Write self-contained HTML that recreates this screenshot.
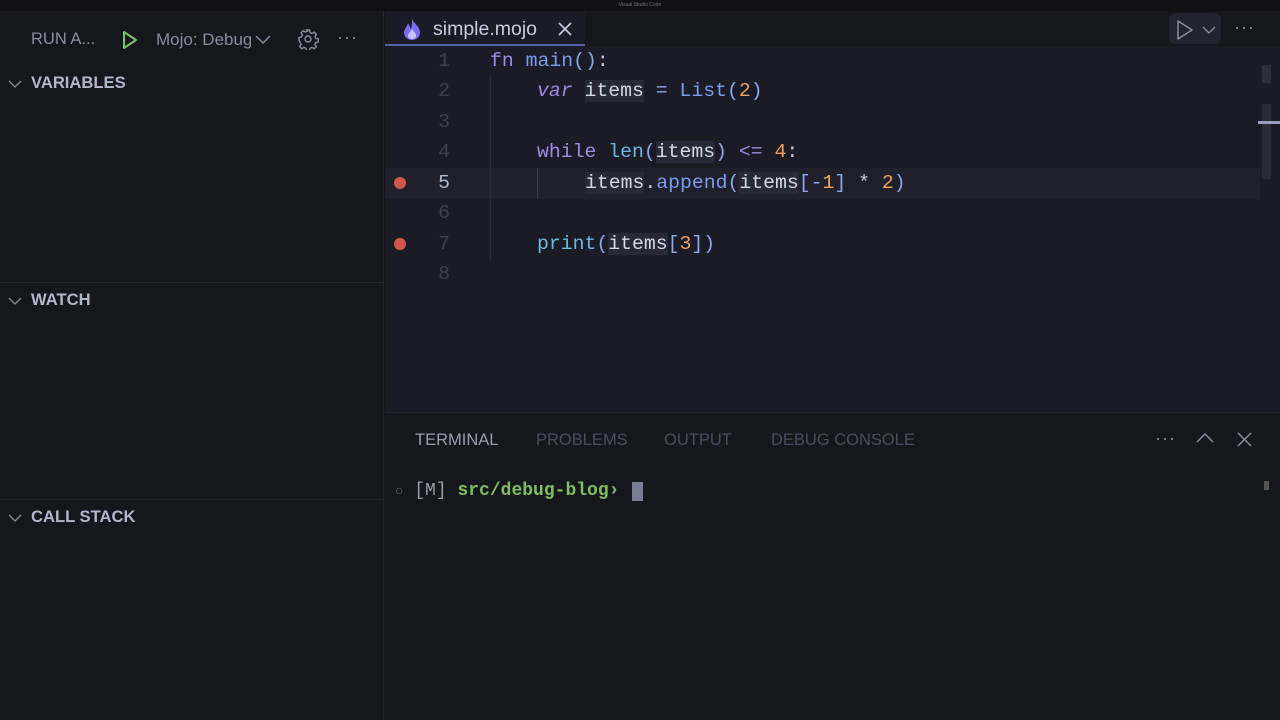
<!DOCTYPE html>
<html><head><style>
*{margin:0;padding:0;box-sizing:border-box}
body{width:1280px;height:720px;background:#16161d;font-family:"Liberation Sans",sans-serif;position:relative;overflow:hidden}
.abs{position:absolute}
.title{left:0;top:0;width:1280px;height:11px;background:#0f0f14;color:#777;font-size:5px;text-align:center;line-height:11px}
.side{left:0;top:11px;width:384px;height:709px;background:#16161d;border-right:1px solid #24242e}
.sec{left:0;width:384px;height:30px;color:#b4b6cc;font-weight:bold;font-size:16.6px;line-height:30px;padding-left:31px}
.chev{position:absolute;left:8px;top:9px}
.tabbar{left:385px;top:11px;width:895px;height:35px;background:#16161d}
.tab{left:385px;top:11px;width:200px;height:35px;background:#1b1b25;border-bottom:2px solid #5560a8}
.editor{left:385px;top:46px;width:895px;height:366px;background:#1b1b25}
.code{font-family:"Liberation Mono",monospace;font-size:19.8px}
.ln{width:65px;text-align:right;color:#3d4052}
.line{left:385px;height:30.5px;line-height:30.5px;width:895px;white-space:pre}
.kw{color:#a188e6}.fn{color:#7a9cf0}.num{color:#f0a060}.id{color:#d4d7e6;background:#272936}.p{color:#8aa8f0}.cy{color:#6cb8e0}.w{color:#c8cbe0}
.bp{width:12px;height:12px;border-radius:50%;background:#d2574a;left:394px}
.panel{left:385px;top:412px;width:895px;height:308px;background:#16161d;border-top:1px solid #24242e}
.ptab{top:431px;font-size:16.5px;color:#4a4d60}
</style></head><body>
<div class="abs title">Visual Studio Code</div>
<div class="abs side"></div>
<div class="abs" style="left:31px;top:30px;color:#8a8ca0;font-size:16.5px">RUN A...</div>
<svg class="abs" style="left:121px;top:30px" width="18" height="20"><path d="M3 2 L15 10 L3 18 Z" fill="none" stroke="#7ec26a" stroke-width="2" stroke-linejoin="round"/></svg>
<div class="abs" style="left:156px;top:30px;color:#8a8ca0;font-size:17px;width:95px;overflow:hidden;white-space:nowrap">Mojo: Debug</div>
<svg class="abs" style="left:254px;top:32px" width="18" height="14"><path d="M2 4 L9 11 L16 4" fill="none" stroke="#8a8ca0" stroke-width="1.5"/></svg>
<svg class="abs" style="left:297px;top:28px" width="22" height="22" viewBox="0 0 22 22"><circle cx="11" cy="11" r="3" fill="none" stroke="#8a8ca0" stroke-width="1.4"/><path d="M9.5 2h3l.5 2.5 2 1 2.2-1.4 2.1 2.1-1.4 2.2 1 2 2.5.5v3l-2.5.5-1 2 1.4 2.2-2.1 2.1-2.2-1.4-2 1-.5 2.5h-3l-.5-2.5-2-1-2.2 1.4-2.1-2.1 1.4-2.2-1-2L2 12.5v-3l2.5-.5 1-2-1.4-2.2 2.1-2.1 2.2 1.4 2-1z" fill="none" stroke="#8a8ca0" stroke-width="1.4"/></svg>
<div class="abs" style="left:337px;top:27px;color:#8a8ca0;font-size:18px;letter-spacing:1px">···</div>

<div class="abs sec" style="top:68px"><svg class="chev" width="14" height="14"><path d="M1 4 L7 10 L13 4" fill="none" stroke="#8a8ca0" stroke-width="1.3"/></svg>VARIABLES</div>
<div class="abs" style="left:0;top:282px;width:384px;height:1px;background:#24242e"></div>
<div class="abs sec" style="top:285px"><svg class="chev" width="14" height="14"><path d="M1 4 L7 10 L13 4" fill="none" stroke="#8a8ca0" stroke-width="1.3"/></svg>WATCH</div>
<div class="abs" style="left:0;top:499px;width:384px;height:1px;background:#24242e"></div>
<div class="abs sec" style="top:502px"><svg class="chev" width="14" height="14"><path d="M1 4 L7 10 L13 4" fill="none" stroke="#8a8ca0" stroke-width="1.3"/></svg>CALL STACK</div>

<div class="abs tabbar"></div>
<div class="abs tab"></div>
<svg class="abs" style="left:401px;top:17px" width="22" height="24"><path d="M11 2 C13 7 19 9 19 16 C19 20 15 23 11 23 C7 23 3 20 3 16 C3 12 6 10 7 6 C9 9 9 11 10 12 C11 9 11 6 11 2Z" fill="#7a6cf0"/><path d="M11 12 C13 15 15 16 15 19 C15 21 13 22 11 22 C9 22 7 21 7 19 C7 17 9 15 11 12Z" fill="#c8c4ff"/></svg>
<div class="abs" style="left:433px;top:18px;color:#c8cbe0;font-size:19.5px">simple.mojo</div>
<svg class="abs" style="left:557px;top:21px" width="16" height="16"><path d="M2 2 L14 14 M14 2 L2 14" stroke="#c8cbe0" stroke-width="1.7"/></svg>
<div class="abs" style="left:1169px;top:13px;width:52px;height:31px;background:#22232e;border-radius:6px"></div>
<svg class="abs" style="left:1175px;top:19px" width="20" height="22"><path d="M3 2 L17 11 L3 20 Z" fill="none" stroke="#8a8ca0" stroke-width="1.5" stroke-linejoin="round"/></svg>
<svg class="abs" style="left:1202px;top:25px" width="14" height="10"><path d="M1 2 L7 8 L13 2" fill="none" stroke="#8a8ca0" stroke-width="1.3"/></svg>
<div class="abs" style="left:1234px;top:17px;color:#8a8ca0;font-size:18px;letter-spacing:1px">···</div>

<div class="abs editor"></div>
<div class="abs" style="left:385px;top:168px;width:875px;height:31px;background:#1f202b"></div>
<div class="abs" style="left:490px;top:76px;width:1px;height:184px;background:#2a2c38"></div>
<div class="abs" style="left:537px;top:168px;width:1px;height:31px;background:#3a3c4a"></div>
<div class="abs" style="left:1262px;top:65px;width:9px;height:18px;background:#2e2f3a"></div>
<div class="abs" style="left:1262px;top:104px;width:9px;height:75px;background:#2a2b36"></div>
<div class="abs" style="left:1258px;top:121px;width:22px;height:3px;background:#9a9cc0"></div>

<div class="abs line code" style="top:46px"><span class="abs ln" style="left:0">1</span><span class="abs" style="left:105px"><span class="kw">fn</span> <span class="fn">main</span><span class="p">()</span><span class="w">:</span></span></div>
<div class="abs line code" style="top:76px"><span class="abs ln" style="left:0">2</span><span class="abs" style="left:152px"><span class="kw" style="font-style:italic">var</span> <span class="id">items</span> <span class="p">=</span> <span class="fn">List</span><span class="p">(</span><span class="num">2</span><span class="p">)</span></span></div>
<div class="abs line code" style="top:107px"><span class="abs ln" style="left:0">3</span></div>
<div class="abs line code" style="top:137px"><span class="abs ln" style="left:0">4</span><span class="abs" style="left:152px"><span class="kw">while</span> <span class="cy">len</span><span class="p">(</span><span class="id">items</span><span class="p">)</span> <span class="kw">&lt;=</span> <span class="num">4</span><span class="w">:</span></span></div>
<div class="abs line code" style="top:168px"><span class="abs ln" style="left:0;color:#b4b8cc">5</span><span class="abs" style="left:200px"><span class="id">items</span><span class="w">.</span><span class="fn">append</span><span class="p">(</span><span class="id">items</span><span class="p">[-</span><span class="num">1</span><span class="p">]</span> <span class="w">*</span> <span class="num">2</span><span class="p">)</span></span></div>
<div class="abs line code" style="top:198px"><span class="abs ln" style="left:0">6</span></div>
<div class="abs line code" style="top:229px"><span class="abs ln" style="left:0">7</span><span class="abs" style="left:152px"><span class="cy">print</span><span class="p">(</span><span class="id">items</span><span class="p">[</span><span class="num">3</span><span class="p">])</span></span></div>
<div class="abs line code" style="top:259px"><span class="abs ln" style="left:0">8</span></div>
<div class="abs bp" style="top:177px"></div>
<div class="abs bp" style="top:238px"></div>

<div class="abs panel"></div>
<div class="abs ptab" style="left:415px;color:#9a9cb0">TERMINAL</div>
<div class="abs ptab" style="left:536px">PROBLEMS</div>
<div class="abs ptab" style="left:664px">OUTPUT</div>
<div class="abs ptab" style="left:771px">DEBUG CONSOLE</div>
<div class="abs" style="left:1155px;top:428px;color:#8a8ca0;font-size:18px;letter-spacing:1px">···</div>
<svg class="abs" style="left:1196px;top:432px" width="18" height="12"><path d="M1 10 L9 2 L17 10" fill="none" stroke="#8a8ca0" stroke-width="1.4"/></svg>
<svg class="abs" style="left:1237px;top:432px" width="15" height="15"><path d="M1 1 L14 14 M14 1 L1 14" stroke="#8a8ca0" stroke-width="1.5"/></svg>
<div class="abs code" style="left:395px;top:480px;font-size:18px;white-space:pre;line-height:22px"><span style="color:#6a6c7a;font-size:14px">○</span> <span style="color:#9a9cb0">[M]</span> <span style="color:#7cc060;font-weight:bold">src/debug-blog›</span> </div>
<div class="abs" style="left:632px;top:482px;width:11px;height:19px;background:#7a7c96"></div>
<div class="abs" style="left:1264px;top:481px;width:5px;height:9px;background:#555"></div>
</body></html>
